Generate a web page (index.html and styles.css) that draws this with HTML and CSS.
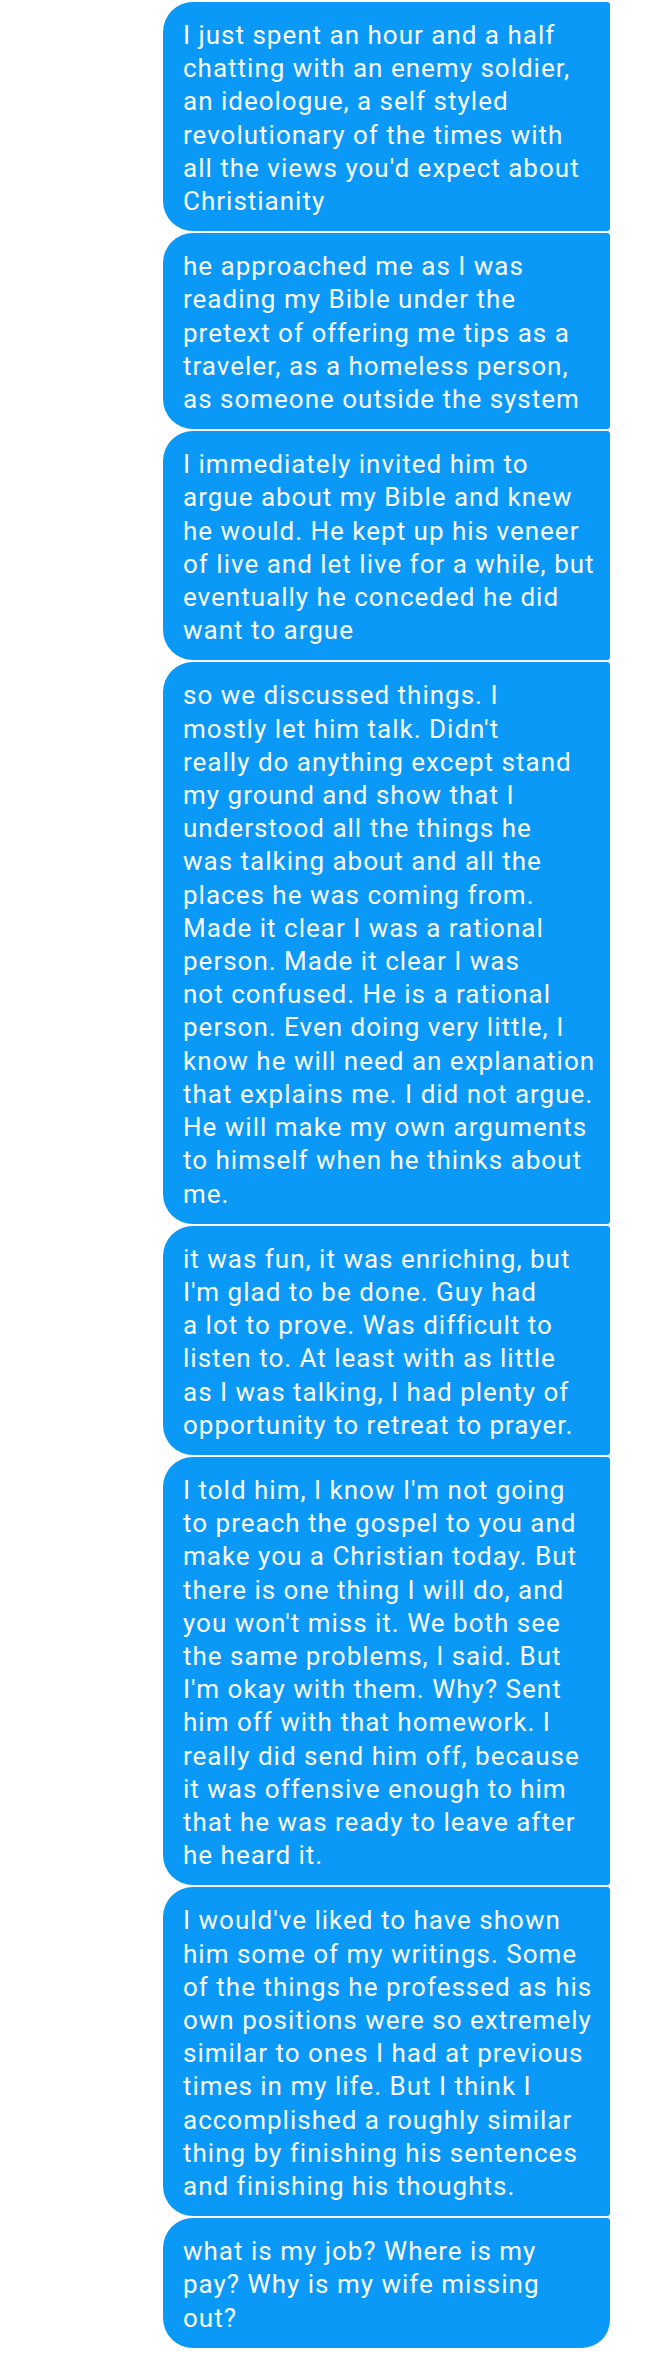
FILE: index.html
```html
<!DOCTYPE html>
<html>
<head>
<meta charset="utf-8">
<link rel="stylesheet" href="styles.css">
</head>
<body>
<div class="thread">
  <div class="bubble first">I just spent an hour and a half<br>chatting with an enemy soldier,<br>an ideologue, a self styled<br>revolutionary of the times with<br>all the views you'd expect about<br>Christianity</div>
  <div class="bubble">he approached me as I was<br>reading my Bible under the<br>pretext of offering me tips as a<br>traveler, as a homeless person,<br>as someone outside the system</div>
  <div class="bubble">I immediately invited him to<br>argue about my Bible and knew<br>he would. He kept up his veneer<br>of live and let live for a while, but<br>eventually he conceded he did<br>want to argue</div>
  <div class="bubble">so we discussed things. I<br>mostly let him talk. Didn't<br>really do anything except stand<br>my ground and show that I<br>understood all the things he<br>was talking about and all the<br>places he was coming from.<br>Made it clear I was a rational<br>person. Made it clear I was<br>not confused. He is a rational<br>person. Even doing very little, I<br>know he will need an explanation<br>that explains me. I did not argue.<br>He will make my own arguments<br>to himself when he thinks about<br>me.</div>
  <div class="bubble">it was fun, it was enriching, but<br>I'm glad to be done. Guy had<br>a lot to prove. Was difficult to<br>listen to. At least with as little<br>as I was talking, I had plenty of<br>opportunity to retreat to prayer.</div>
  <div class="bubble">I told him, I know I'm not going<br>to preach the gospel to you and<br>make you a Christian today. But<br>there is one thing I will do, and<br>you won't miss it. We both see<br>the same problems, I said. But<br>I'm okay with them. Why? Sent<br>him off with that homework. I<br>really did send him off, because<br>it was offensive enough to him<br>that he was ready to leave after<br>he heard it.</div>
  <div class="bubble">I would've liked to have shown<br>him some of my writings. Some<br>of the things he professed as his<br>own positions were so extremely<br>similar to ones I had at previous<br>times in my life. But I think I<br>accomplished a roughly similar<br>thing by finishing his sentences<br>and finishing his thoughts.</div>
  <div class="bubble last">what is my job? Where is my<br>pay? Why is my wife missing<br>out?</div>
</div>
</body>
</html>
```
FILE: styles.css
```css
html, body {
  margin: 0;
  padding: 0;
  background: #ffffff;
}
.thread {
  display: flex;
  flex-direction: column;
  align-items: flex-end;
  gap: 2px;
  padding: 2px 38px 0 0;
}
.bubble {
  box-sizing: border-box;
  width: 447px;
  background: #0a99f6;
  color: #f7fbff;
  font-family: Roboto, "Liberation Sans", sans-serif;
  font-size: 26px;
  line-height: 33.2px;
  letter-spacing: 1px;
  padding: 17px 6px 13px 20px;
  border-radius: 30px 3px 3px 30px;
  white-space: nowrap;
}
.bubble.last {
  border-radius: 30px 3px 28px 30px;
}
```
